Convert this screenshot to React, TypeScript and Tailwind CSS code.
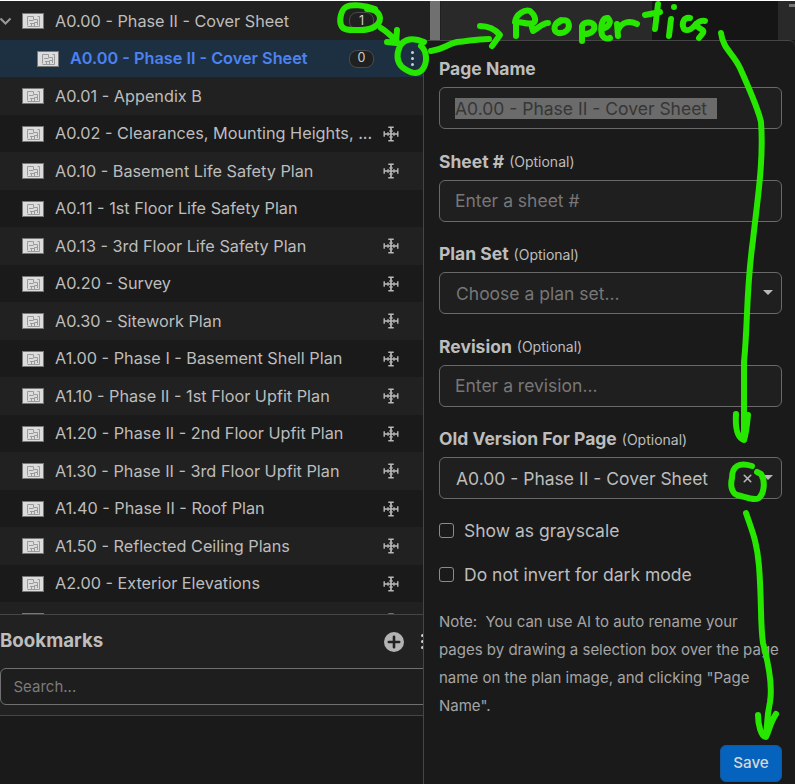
import type { ReactNode } from "react";
import { X } from "lucide-react";

type Page = {
  name: string;
  scaled?: boolean;
};

const PAGES: Page[] = [
  { name: "A0.01 - Appendix B" },
  { name: "A0.02 - Clearances, Mounting Heights, ...", scaled: true },
  { name: "A0.10 - Basement Life Safety Plan", scaled: true },
  { name: "A0.11 - 1st Floor Life Safety Plan" },
  { name: "A0.13 - 3rd Floor Life Safety Plan", scaled: true },
  { name: "A0.20 - Survey", scaled: true },
  { name: "A0.30 - Sitework Plan", scaled: true },
  { name: "A1.00 - Phase I - Basement Shell Plan", scaled: true },
  { name: "A1.10 - Phase II - 1st Floor Upfit Plan", scaled: true },
  { name: "A1.20 - Phase II - 2nd Floor Upfit Plan", scaled: true },
  { name: "A1.30 - Phase II - 3rd Floor Upfit Plan", scaled: true },
  { name: "A1.40 - Phase II - Roof Plan", scaled: true },
  { name: "A1.50 - Reflected Ceiling Plans", scaled: true },
  { name: "A2.00 - Exterior Elevations", scaled: true },
];

function PlanIcon() {
  return (
    <svg width="22" height="16" viewBox="0 0 22 16" className="shrink-0">
      <rect width="22" height="16" fill="#777" />
      <rect x="1" y="1" width="20" height="14" fill="#dcdcdc" />
      <path
        d="M5.5 12.5V3.5H11.5V6.5H15.5V12M5.5 13.5H17.5V3.5H15.5M7 7.5H11.5M8 10.5H12M9.5 10.5V13M12.5 13V9.5H15.5"
        fill="none"
        stroke="#9b9b9b"
      />
    </svg>
  );
}

function ScaleIcon() {
  return (
    <svg width="16" height="16" viewBox="0 0 16 16" className="shrink-0" fill="none" stroke="#b9b9b9">
      <path d="M8 1V15M1 8H15" strokeWidth="1.7" />
      <path d="M5.3 1.2H10.7M5.3 14.8H10.7M1.2 5.3V10.7M14.8 5.3V10.7" strokeWidth="1.4" />
      <path d="M6 5H10M6 11H10M5 6V10M11 6V10" strokeWidth="1.1" />
    </svg>
  );
}

function CountBadge({ count }: { count: number }) {
  return (
    <span className="flex h-[18px] w-[25px] items-center justify-center rounded-lg border border-[#4a4a4a] bg-[#202020] text-[12.5px] text-[#d0d0d0]">
      {count}
    </span>
  );
}

function Dots() {
  return (
    <span className="flex flex-col gap-[3px]">
      <i className="size-[3px] rounded-full bg-[#d0d0d0]" />
      <i className="size-[3px] rounded-full bg-[#d0d0d0]" />
      <i className="size-[3px] rounded-full bg-[#d0d0d0]" />
    </span>
  );
}

function PagesPanel() {
  return (
    <div className="flex h-[614px] flex-col overflow-hidden">
      <div className="flex h-10 shrink-0 items-center border-t border-white bg-[#212121] pt-px">
        <svg width="12" height="8" viewBox="0 0 12 8" className="mr-[10.4px] shrink-0" fill="none" stroke="#999" strokeWidth="2">
          <path d="M0.5 1.5L5.5 6.5L10.5 1.5" />
        </svg>
        <PlanIcon />
        <span className="ml-[10.6px] w-[294px]">A0.00 - Phase II - Cover Sheet</span>
        <CountBadge count={1} />
      </div>
      <div className="flex h-[37px] shrink-0 items-center bg-[#1d3041] pl-[37.4px] text-[#4d82f3]">
        <PlanIcon />
        <span className="ml-[10.6px] w-[279px] font-semibold">A0.00 - Phase II - Cover Sheet</span>
        <CountBadge count={0} />
        <span className="ml-[37.5px]">
          <Dots />
        </span>
      </div>
      {PAGES.map((page) => (
        <div key={page.name} className="flex h-[37.5px] shrink-0 items-center pl-[22.4px] pt-[0.5px] odd:bg-[#212121] even:bg-[#1a1a1a]">
          <PlanIcon />
          <span className="ml-[10.6px] w-[328.5px] whitespace-nowrap">{page.name}</span>
          {page.scaled && <ScaleIcon />}
        </div>
      ))}
      {/* next row, only its icons peek out above the bookmarks */}
      <div className="flex h-[37.5px] shrink-0 items-center justify-between bg-[#212121] pl-[22.4px] pr-6">
        <PlanIcon />
        <ScaleIcon />
      </div>
    </div>
  );
}

function BookmarksPanel() {
  return (
    <div className="h-[102px] border-y border-[#464646] bg-[#212121]">
      <div className="flex h-[53px] items-center">
        <h2 className="w-[384px] shrink-0 text-[18.7px] font-bold">Bookmarks</h2>
        <svg width="20" height="20" viewBox="0 0 20 20" className="shrink-0">
          <circle cx="10" cy="10" r="10" fill="#b3b3b3" />
          <path d="M10 4.8V15.2M4.8 10H15.2" stroke="#212121" strokeWidth="2.6" strokeLinecap="round" />
        </svg>
        <span className="ml-[17px] shrink-0">
          <Dots />
        </span>
      </div>
      <div className="flex h-[37px] w-[440px] items-center rounded-md border border-[#707070] bg-[#1e1e1e] pl-[12.5px] pt-px text-[15px] text-[#7b7b7b]">
        Search...
      </div>
    </div>
  );
}

function Field({ label, optional, children }: { label: string; optional?: boolean; children: ReactNode }) {
  return (
    <div className="mb-[22.5px]">
      <label className="mb-[7.5px] flex h-[20.5px] items-center gap-[5px] text-[17.5px] font-bold">
        {label}
        {optional && <span className="text-[14px] font-normal">(Optional)</span>}
      </label>
      <div className="flex h-[42px] items-center rounded-md border border-[#696969] bg-[#1f1f1f] pl-[15px] pt-px text-[17.5px] text-[#777]">
        {children}
      </div>
    </div>
  );
}

function Caret() {
  return (
    <svg width="10" height="5" viewBox="0 0 10 5" className="-mt-0.5">
      <path d="M0 0H10L5 5Z" fill="#b9b9b9" />
    </svg>
  );
}

function CheckRow({ label }: { label: string }) {
  return (
    <label className="flex h-11 items-center gap-2.5 text-[17.5px]">
      <span className="size-[15px] rounded-[3px] border border-[#8b8b8b]" />
      <span className="pt-px">{label}</span>
    </label>
  );
}

function PropertiesPanel() {
  return (
    <div className="flex h-[744px] flex-col overflow-hidden rounded-tr-md border-l border-t border-[#464646] bg-[#1a1a1a] pl-[15px] pr-[13px] pt-[18px]">
      <Field label="Page Name">
        <span className="w-[262px] bg-[#6b6b6b] leading-[21px] text-[#363636]">A0.00 - Phase II - Cover Sheet</span>
      </Field>
      <Field label="Sheet #" optional>Enter a sheet #</Field>
      <Field label="Plan Set" optional>
        <span className="ml-px w-[307px] pt-px">Choose a plan set...</span>
        <Caret />
      </Field>
      <Field label="Revision" optional>Enter a revision...</Field>
      <Field label="Old Version For Page" optional>
        <span className="ml-px w-[285px] pt-px text-[#bdbdbd]">A0.00 - Phase II - Cover Sheet</span>
        <X size={13} strokeWidth={2.8} className="mr-[9px] text-[#b9b9b9]" />
        <Caret />
      </Field>
      <div className="-mt-[13px]">
        <CheckRow label="Show as grayscale" />
        <CheckRow label="Do not invert for dark mode" />
      </div>
      <p className="mt-[11px] whitespace-pre text-[15px] leading-7 text-[#a5a5a5]">
        {`Note:  You can use AI to auto rename your
pages by drawing a selection box over the page
name on the plan image, and clicking "Page
Name".`}
      </p>
      <button className="mt-[25px] h-[37px] w-[62px] shrink-0 self-end rounded-md border border-[#155799] bg-[#0562bd] text-[15.2px] font-medium text-[#d7d7d7]">
        Save
      </button>
    </div>
  );
}

// freehand marker strokes drawn over the whole window
function Annotations() {
  return (
    <svg
      className="pointer-events-none absolute inset-0"
      width="795"
      height="784"
      viewBox="0 0 795 784"
      fill="none"
      stroke="#27e600"
      strokeWidth="6"
      strokeLinecap="round"
      strokeLinejoin="round"
    >
      <path d="M375 9C365 5 351 4 346 7C341 10 339 20 341 25C343 31 351 30 360 30C371 30 380 26 380 18C379 12 375 9 367 9" />
      <path d="M381 28C389 33 392 37 398 43M397 30L396 43L387 42" />
      <path d="M424 42C413 37 404 39 400 46C396 55 397 62 402 67C409 72 416 76 422 70C428 63 427 51 421 46" />
      <path d="M431 51C445 49 445 45 457 42C470 41 475 39 489 39M480 26C488 26 495 29 500 35L492 46" />
      <path d="M516 36V21M515 22C516 14 525 9 530 11C535 15 537 21 533 23C528 25 522 22 518 22M531 24L533 31C539 28 542 23 548 23" />
      <path d="M561 20C554 23 552 31 558 33C566 34 571 28 568 22C566 19 561 20 558 23" />
      <path d="M582 41V26C584 22 591 21 594 25C596 31 590 34 584 34" />
      <path d="M602 29C609 27 612 22 608 18C602 17 600 27 602 35C604 39 608 39 610 38" />
      <path d="M618 36L617 24M618 30C622 22 629 20 637 24" />
      <path d="M658 4L655 29M645 15L660 12M671 19L669 36M674 7V7" />
      <path d="M690 18C684 17 681 23 684 29C688 32 693 28 696 24M705 21C700 20 696 23 697 26C700 30 705 29 703 33L699 38" />
      <path d="M721 33C723 49 733 53 740 68C751 93 758 108 761 122C764 161 757 202 753 240C746 290 748 322 744 362L744 440M736 414C735 430 738 438 744 440C746 435 747 425 748 415" />
      <path d="M752 466C739 462 732 466 732 478C730 486 732 493 737 495C746 497 754 501 759 498C765 492 765 480 761 474L757 472" />
      <path d="M746 513C752 531 757 541 759 566C762 606 760 621 763 643C770 669 772 690 770 702C766 721 768 722 766 735M758 715C758 724 761 737 766 737C769 731 770 723 776 714" />
    </svg>
  );
}

export default function App() {
  return (
    <div className="relative flex h-[784px] w-[795px] overflow-hidden bg-[#1a1a1a] font-['Inter',sans-serif] text-[16.25px] text-[#bdbdbd]">
      <aside className="w-[423px] shrink-0 overflow-hidden">
        <PagesPanel />
        <BookmarksPanel />
      </aside>
      <main className="min-w-0 flex-1">
        <div className="flex h-10 border-t border-white bg-[#292929]">
          <div className="w-[7px] bg-[#212121]" />
          <div className="w-2.5 bg-[#707070]" />
          <div className="w-[212px] border-l border-[#202020]" />
          <div className="w-[126px] bg-[#151515]" />
          <div className="flex flex-1 justify-end pt-[3px]">
            <div className="h-[3px] w-1.5 bg-[#777]" />
          </div>
        </div>
        <PropertiesPanel />
      </main>
      <Annotations />
    </div>
  );
}
